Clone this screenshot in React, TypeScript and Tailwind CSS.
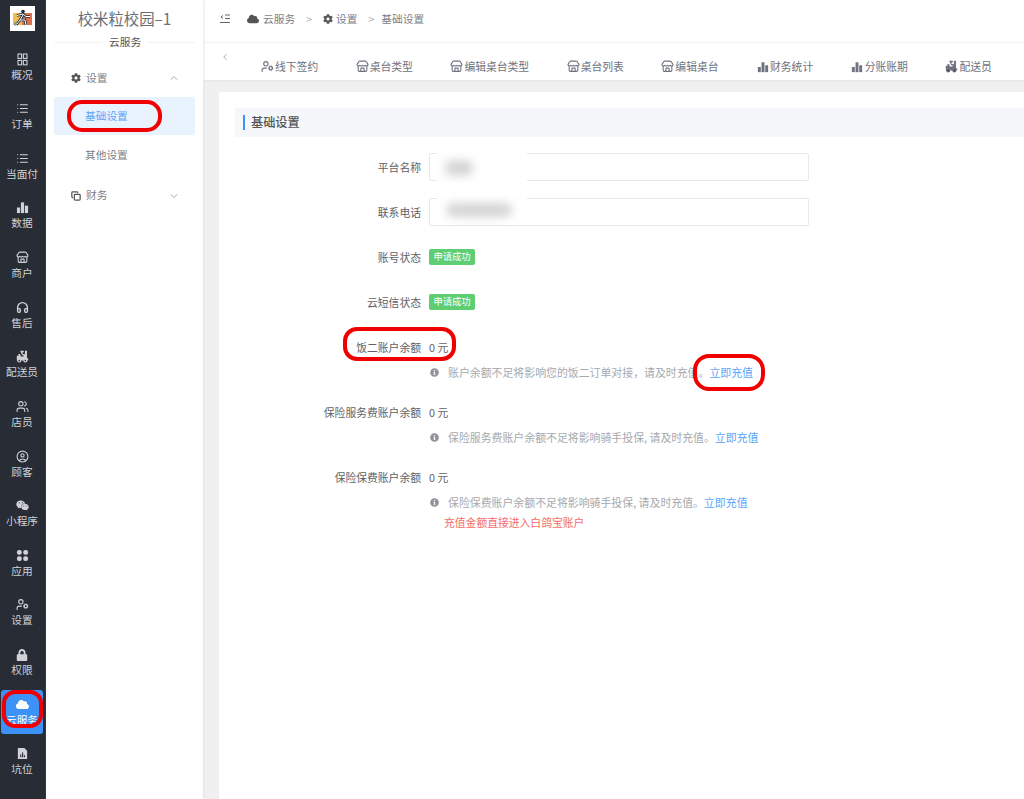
import React from 'react';
import { ChevronDown, ChevronLeft, ChevronUp, CircleUser, Copy, Headphones, List, Store, UserCog, Users } from 'lucide-react';
import { FaCloud, FaCog, FaInfoCircle, FaLock, FaWeixin } from 'react-icons/fa';

const font = { fontFamily: '"Noto Sans CJK SC", "Noto Sans", sans-serif' };

function Scooter({ size = 14 }: { size?: number }) {
  return (
    <svg width={size} height={size} viewBox="0 0 16 16" fill="currentColor">
      <path d="M5 1h4l1 1-1 1H8v2h2.500l.5 1V1h2.500v9H15v3h-1a2.500 2.500 0 0 1-5 0H6.500a2.500 2.500 0 0 1-5 0H1V7h2V5h2l1 3h3l.5-1.500H7.500L6 3z" />
      <circle cx="4" cy="13" r="1" fill="#282c35" />
      <circle cx="11.500" cy="13" r="1" fill="#282c35" />
    </svg>
  );
}

function Bars({ size = 14 }: { size?: number }) {
  return (
    <svg width={size} height={size} viewBox="0 0 14 14" fill="currentColor">
      <rect x="1" y="7" width="3.400" height="6" />
      <rect x="5.300" y="1.500" width="3.400" height="11.500" />
      <rect x="9.600" y="5" width="3.400" height="8" />
    </svg>
  );
}

function Overview() {
  return (
    <svg width="13" height="13" viewBox="0 0 13 13" fill="none" stroke="currentColor" strokeWidth="1.100">
      <rect x="2" y="1" width="3.600" height="4.400" />
      <rect x="7.400" y="1" width="3.600" height="4.400" />
      <rect x="2" y="7.400" width="3.600" height="4.400" />
      <rect x="7.400" y="7.400" width="3.600" height="4.400" />
    </svg>
  );
}

function Apps() {
  return (
    <svg width="13" height="13" viewBox="0 0 14 14" fill="currentColor">
      <rect x="1" y="1" width="5.200" height="5.200" rx="2.200" />
      <rect x="7.800" y="1" width="5.200" height="5.200" rx="2.200" />
      <rect x="1" y="7.800" width="5.200" height="5.200" rx="2.200" />
      <rect x="7.800" y="7.800" width="5.200" height="5.200" rx="2.200" />
    </svg>
  );
}

function FileChart() {
  return (
    <svg width="13" height="13" viewBox="0 0 14 14" fill="currentColor">
      <path fillRule="evenodd" d="M2 1h7l3 3v9H2zM4.500 8v3h1.200V8zM6.500 6v5h1.200V6zM8.500 9v2h1.200V9z" />
    </svg>
  );
}

function Logo() {
  return (
    <div className="flex h-[25px] w-[25px] items-center justify-center bg-white">
      <svg width="25" height="25" viewBox="0 0 25 25">
        <rect x="3" y="7" width="9" height="12" fill="#f0bd55" />
        <rect x="12" y="7" width="10" height="12" fill="#e2704a" />
        <circle cx="13" cy="5.500" r="1.800" fill="#1d2a3a" />
        <path d="M7 9.500l6-1.500 3 2.500h4M13 9l-3 5h5l1 5M10 14l-3 4H4" fill="none" stroke="#1d2a3a" strokeWidth="2.600" />
        <path d="M7 9.500l6-1.500 3 2.500h4M13 9l-3 5h5l1 5M10 14l-3 4H4" fill="none" stroke="#fff" strokeWidth="1" />
      </svg>
    </div>
  );
}

const navItems = [
  { label: '概况', icon: <Overview /> },
  { label: '订单', icon: <List size={13} /> },
  { label: '当面付', icon: <List size={13} /> },
  { label: '数据', icon: <Bars size={13} /> },
  { label: '商户', icon: <Store size={13} /> },
  { label: '售后', icon: <Headphones size={13} strokeWidth={2.600} /> },
  { label: '配送员', icon: <Scooter size={13} /> },
  { label: '店员', icon: <Users size={13} /> },
  { label: '顾客', icon: <CircleUser size={13} /> },
  { label: '小程序', icon: <FaWeixin size={13} /> },
  { label: '应用', icon: <Apps /> },
  { label: '设置', icon: <UserCog size={13} /> },
  { label: '权限', icon: <FaLock size={12} /> },
  { label: '云服务', icon: <FaCloud size={13} />, active: true },
  { label: '坑位', icon: <FileChart /> },
];

const tabs = [
  { label: '线下签约', icon: <UserCog size={13} /> },
  { label: '桌台类型', icon: <Store size={13} /> },
  { label: '编辑桌台类型', icon: <Store size={13} /> },
  { label: '桌台列表', icon: <Store size={13} /> },
  { label: '编辑桌台', icon: <Store size={13} /> },
  { label: '财务统计', icon: <Bars size={12} /> },
  { label: '分账账期', icon: <Bars size={12} /> },
  { label: '配送员', icon: <Scooter size={13} /> },
];

function Row({ label, children }: { label: string; children: React.ReactNode }) {
  return (
    <div className="flex h-7 items-center">
      <div className="w-[194px] pr-2 text-right text-[10.800px] text-[#606266]">{label}</div>
      {children}
    </div>
  );
}

function Hint({ text }: { text: string }) {
  return (
    <div className="ml-[194px] flex h-5 items-center text-[10.900px] text-[#a6a9ad]">
      <FaInfoCircle size={9} className="ml-[1px] mr-[9px] text-[#909399]" />
      <span>{text}</span>
      <span className="text-[#5aa5f8]">立即充值</span>
    </div>
  );
}

function Tag() {
  return (
    <div className="flex h-4 w-[46px] items-center justify-center rounded-[2px] bg-[#5fcd72] text-[9.300px] text-white">申请成功</div>
  );
}

function Mark({ className }: { className: string }) {
  return <div className={`pointer-events-none absolute z-20 border-[4px] border-[#f00000] ${className}`} />;
}

export default function App() {
  return (
    <div className="relative flex h-[799px] w-[1024px] overflow-hidden bg-[#f0f0f0]" style={font}>
      <aside className="flex w-[46px] shrink-0 flex-col items-center bg-[#282c35] pr-[2px] pt-[6px] text-[#d0d2d6] shadow-[1px_0_1px_#9a9a9a]">
        <Logo />
        <div className="mt-[13.500px] flex flex-col items-center gap-[5.640px]">
          {navItems.map((item) => (
            <div
              key={item.label}
              className={`flex h-11 w-[42px] flex-col items-center justify-center rounded-[3px] ${item.active ? 'bg-[#3c92f6] text-white' : ''}`}
            >
              <span className="flex h-[15px] items-center">{item.icon}</span>
              <span className="text-[10.700px] leading-[15px]">{item.label}</span>
            </div>
          ))}
        </div>
      </aside>

      <aside className="z-10 w-[157px] shrink-0 bg-white text-[#7b7e85] shadow-[1px_0_2px_#e4e4e4]">
        <div className="flex h-[38px] items-center justify-center text-[15.400px] text-[#6b6e74]">校米粒校园–1</div>
        <div className="relative mx-2 mt-1 border-t border-[#f2f2f2]">
          <span className="absolute left-[48px] top-[-9px] bg-white px-[7px] text-[10.700px] leading-[16px] text-[#555]">云服务</span>
        </div>
        <div className="ml-2 mt-[25px] w-[141px]">
          <div className="flex h-5 items-center pl-[17px] pr-[15px] text-[10.700px]">
            <FaCog size={10} className="mr-[5px] text-[#555]" />
            <span>设置</span>
            <ChevronUp size={12} className="ml-auto text-[#aaa]" />
          </div>
          <div className="mt-[9px] flex h-[38px] items-center rounded-[3px] bg-[#e8f3fe] pl-[31px] pt-[1px] text-[10.700px] text-[#5aa5f8]">基础设置</div>
          <div className="flex h-[41px] items-center pl-[31px] text-[10.700px]">其他设置</div>
          <div className="flex h-[39px] items-center pl-[17px] pr-[15px] text-[10.700px]">
            <Copy size={10} strokeWidth={3} className="mr-[5px] text-[#555]" />
            <span>财务</span>
            <ChevronDown size={12} className="ml-auto text-[#aaa]" />
          </div>
        </div>
      </aside>

      <div className="flex min-w-0 flex-1 flex-col">
        <header className="flex h-[43px] items-center border-b border-[#f4f4f4] bg-white pb-1 pl-[16px] text-[10.700px] text-[#7b7e85]">
          <svg width="11" height="10" viewBox="0 0 11 10" fill="none" stroke="#666" strokeWidth="1">
            <path d="M4 1.500l-2 1.500 2 1.500M6 1h5M6 4.500h5M1 8.500h10" />
          </svg>
          <FaCloud size={12} className="ml-[17px] mr-[4px] text-[#555]" />
          <span>云服务</span>
          <span className="mx-[11px] text-[#aaa]">&gt;</span>
          <FaCog size={10} className="mr-[3px] text-[#555]" />
          <span>设置</span>
          <span className="ml-[11px] mr-[7px] text-[#aaa]">&gt;</span>
          <span>基础设置</span>
        </header>

        <div className="relative z-[1] flex h-[37px] shrink-0 items-center whitespace-nowrap bg-white pl-[17px] text-[10.800px] text-[#6f7380] shadow-[0_1px_2px_#e4e4e4]">
          <ChevronLeft size={10} className="mb-[10px] mr-[31px] shrink-0 text-[#999]" />
          <div className="flex gap-[37.500px] pt-[10px]">
            {tabs.map((tab) => (
              <div key={tab.label} className="flex items-center gap-[1px]">
                <span className="flex w-[13px] justify-center">{tab.icon}</span>
                <span>{tab.label}</span>
              </div>
            ))}
          </div>
        </div>

        <main className="ml-4 mt-3 flex-1 bg-white pl-4 pt-4">
          <div className="flex h-[29px] items-center bg-[#f5f7fa] pl-2 text-[12.200px] font-medium text-[#555]">
            <span className="mr-[6px] h-[15px] w-[2px] bg-[#3c92f6]" />
            基础设置
          </div>

          <div className="mt-4 flex flex-col">
            <Row label="平台名称">
              <div className="h-7 w-[380px] rounded-[2px] border border-[#e6e8ec]" />
            </Row>
            <div className="mt-[17px]">
              <Row label="联系电话">
                <div className="h-7 w-[380px] rounded-[2px] border border-[#e6e8ec]" />
              </Row>
            </div>
            <div className="mt-[17px]">
              <Row label="账号状态"><Tag /></Row>
            </div>
            <div className="mt-[17px]">
              <Row label="云短信状态"><Tag /></Row>
            </div>
            <div className="mt-[17px]">
              <Row label="饭二账户余额"><span className="text-[10.800px] text-[#606266]">0 元</span></Row>
            </div>
            <div className="mt-[1px]">
              <Hint text="账户余额不足将影响您的饭二订单对接，请及时充值。" />
            </div>
            <div className="mt-[16px]">
              <Row label="保险服务费账户余额"><span className="text-[10.800px] text-[#606266]">0 元</span></Row>
            </div>
            <div className="mt-[1px]">
              <Hint text="保险服务费账户余额不足将影响骑手投保, 请及时充值。" />
            </div>
            <div className="mt-[16px]">
              <Row label="保险保费账户余额"><span className="text-[10.800px] text-[#606266]">0 元</span></Row>
            </div>
            <div className="mt-[1px]">
              <Hint text="保险保费账户余额不足将影响骑手投保, 请及时充值。" />
            </div>
            <div className="ml-[209px] flex h-5 items-center text-[10.800px] text-[#f56c6c]">充值金额直接进入白鸽宝账户</div>
          </div>
        </main>
      </div>

      {/* blurred-out values */}
      <div className="absolute left-[437px] top-[150px] z-10 h-[73px] w-[90px] bg-white/95" />
      <div className="absolute left-[445px] top-[160px] z-10 h-4 w-7 rounded-full bg-[#d4d4d4] blur-[5px]" />
      <div className="absolute left-[446px] top-[203px] z-10 h-[14px] w-[66px] rounded-full bg-[#d4d4d4] blur-[5px]" />

      {/* red annotations */}
      <Mark className="left-[67px] top-[100px] h-[32px] w-[95px] rounded-[15px]" />
      <Mark className="left-[2px] top-[690px] h-[38px] w-[41px] rounded-[13px]" />
      <Mark className="left-[343px] top-[327px] h-[34px] w-[113px] rounded-[14px]" />
      <Mark className="left-[693px] top-[354px] h-[37px] w-[72px] rounded-[16px]" />
    </div>
  );
}
